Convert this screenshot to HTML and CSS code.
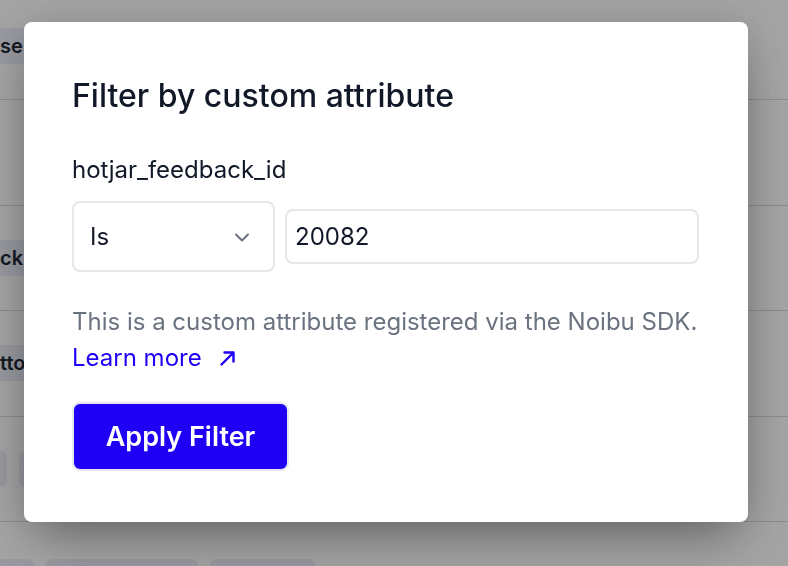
FILE: index.html
```html
<!DOCTYPE html>
<html lang="en">
  <head>
    <meta charset="UTF-8" />
    <meta name="viewport" content="width=device-width, initial-scale=1.0" />
    <title>Filter by custom attribute</title>
    <link rel="stylesheet" href="styles.css">
  </head>
  <body>
    <div class="page">
      <div class="row first">
        <span class="chip">se</span>
      </div>
      <div class="row"></div>
      <div class="row">
        <span class="chip">ck</span>
      </div>
      <div class="row">
        <span class="chip">tto</span>
      </div>
      <div class="row tags">
        <span class="tag tag-a"></span>
        <span class="tag tag-b"></span>
      </div>
      <div class="row tags last">
        <span class="tag tag-c"></span>
        <span class="tag tag-d"></span>
        <span class="tag tag-e"></span>
      </div>
    </div>

    <div class="overlay">
      <div class="modal">
        <h2>Filter by custom attribute</h2>
        <label class="field-label" for="attrValue">hotjar_feedback_id</label>
        <div class="inputs">
          <button class="operator" type="button">
            <span>Is</span>
            <svg width="20" height="20" viewBox="0 0 20 20" fill="none">
              <path d="M4 7.5l6 6 6-6" stroke="#6b7280" stroke-width="2" stroke-linecap="round" stroke-linejoin="round" />
            </svg>
          </button>
          <input type="text" id="attrValue" value="20082" />
        </div>
        <p class="help">
          This is a custom attribute registered via the Noibu SDK.
          <a href="#" class="learn">Learn more
            <svg width="20" height="20" viewBox="0 0 20 20" fill="none">
              <path d="M3.5 16.5L15 5M6.5 4.5h9v9" stroke="currentColor" stroke-width="2.4" stroke-linecap="round" stroke-linejoin="round" />
            </svg>
          </a>
        </p>
        <button class="apply" type="button">Apply Filter</button>
      </div>
    </div>
  </body>
</html>
```

FILE: styles.css
```css
body {
  font-family: Inter, "Noto Sans", Arial, sans-serif;
  background-color: #ffffff;
  margin: 0;
  padding: 0;
  color: #111827;
  overflow: hidden;
}

/* page behind the dialog */
.page {
  width: 100%;
}
.row {
  box-sizing: border-box;
  height: 105.5px;
  border-bottom: 1px solid #d6d8dc;
  display: flex;
  align-items: center;
  gap: 12px;
}
.row.first {
  height: 100px;
  padding-bottom: 7px;
}
.chip {
  display: inline-block;
  background-color: #eceff8;
  color: #1f2937;
  font-size: 20px;
  font-weight: 600;
  line-height: 36px;
  padding: 0 12px 0 0;
  border-radius: 0 6px 6px 0;
  white-space: nowrap;
}
.tag {
  display: inline-block;
  height: 36px;
  background-color: #eceff8;
  border-radius: 6px;
}
.tags .tag:first-child {
  margin-left: -30px;
}
.tag-a {
  width: 37px;
}
.tag-b {
  width: 60px;
}
.row.last {
  height: 44px;
  border-bottom: none;
  align-items: flex-start;
  padding-top: 37px;
  overflow: hidden;
}
.tag-c {
  width: 64px;
}
.tag-d {
  width: 152px;
}
.tag-e {
  width: 105px;
}

/* dialog */
.overlay {
  position: fixed;
  inset: 0;
  background-color: rgba(0, 0, 0, 0.36);
  padding: 22px 0 0 24px;
}
.modal {
  box-sizing: border-box;
  width: 724px;
  height: 500px;
  background-color: #ffffff;
  border-radius: 8px;
  padding: 54px 48px 0;
  box-shadow: 0 25px 50px -12px rgba(0, 0, 0, 0.35), 0 0 40px rgba(0, 0, 0, 0.12);
}
h2 {
  margin: 0;
  font-size: 32px;
  line-height: 40px;
  font-weight: 500;
  color: #111827;
}
.field-label {
  display: block;
  margin-top: 36px;
  font-size: 24px;
  line-height: 36px;
}
.inputs {
  display: flex;
  align-items: center;
  gap: 10px;
  margin-top: 13px;
}
.operator {
  box-sizing: border-box;
  width: 203px;
  height: 71px;
  display: flex;
  align-items: center;
  justify-content: space-between;
  padding: 0 21px 0 16px;
  background-color: #ffffff;
  border: 2px solid #e5e7eb;
  border-radius: 8px;
  font-family: inherit;
  font-size: 24px;
  color: #111827;
}
input {
  box-sizing: border-box;
  width: 414px;
  height: 55px;
  padding: 0 8px;
  border: 2px solid #e5e7eb;
  border-radius: 8px;
  font-family: inherit;
  font-size: 24px;
  color: #111827;
  outline: none;
}
.help {
  margin: 32px 0 0;
  font-size: 24px;
  line-height: 36px;
  color: #6b7280;
}
.learn {
  display: inline-flex;
  align-items: center;
  gap: 16px;
  color: #1f00f5;
  text-decoration: none;
}
.apply {
  display: block;
  box-sizing: border-box;
  margin-top: 26px;
  width: 217px;
  height: 69px;
  background-color: #1f00f5;
  color: #ffffff;
  border: 2px solid #e5e7eb;
  border-radius: 8px;
  font-family: inherit;
  font-size: 27px;
  font-weight: 600;
}
```
